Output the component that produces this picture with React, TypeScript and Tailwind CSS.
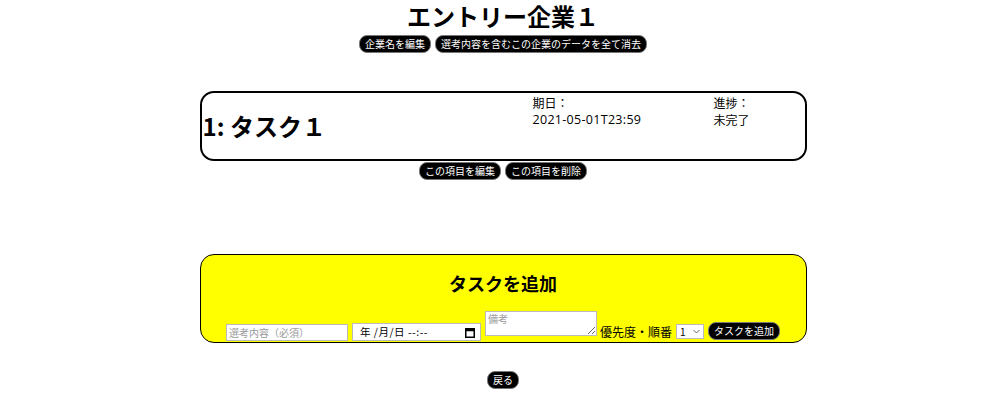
import React from 'react';

const jp = '"Noto Sans CJK JP", "Noto Sans", sans-serif';

function Btn({ children }: { children: React.ReactNode }) {
  return (
    <button
      className="inline-flex items-center h-[18px] px-[5px] bg-black text-white text-[10px] leading-none rounded-[8px] border-[1.5px] border-[#777]"
      style={{ fontFamily: jp }}
    >
      {children}
    </button>
  );
}

export default function App() {
  return (
    <main className="w-[1006px] min-h-[400px] bg-white text-black flex flex-col items-center" style={{ fontFamily: jp }}>
      {/* Header */}
      <h1 className="text-[24px] font-bold leading-[32px]">エントリー企業１</h1>
      <div className="flex gap-[4px] mt-[3px]">
        <Btn>企業名を編集</Btn>
        <Btn>選考内容を含むこの企業のデータを全て消去</Btn>
      </div>

      {/* Task card */}
      <div className="mt-[38px] w-[607px] h-[70px] border-2 border-black rounded-[14px] flex">
        <div className="w-[331px] flex items-center pl-[1px] text-[24px] font-bold">1: タスク１</div>
        <div className="w-[181px] pt-[1px] text-[12px] leading-[17px]">
          <div>期日：</div>
          <div className="text-[12.5px] tracking-[0.3px]" style={{ fontFamily: '"Open Sans", sans-serif' }}>2021-05-01T23:59</div>
        </div>
        <div className="flex-1 pt-[1px] text-[12px] leading-[17px]">
          <div>進捗：</div>
          <div>未完了</div>
        </div>
      </div>
      <div className="flex gap-[4px] mt-[1px]">
        <Btn>この項目を編集</Btn>
        <Btn>この項目を削除</Btn>
      </div>

      {/* Add task */}
      <div className="mt-[74px] w-[607px] h-[89px] bg-[#ffff00] border-[1.5px] border-black rounded-[14px] flex flex-col items-center">
        <h2 className="mt-[16px] text-[18px] font-bold leading-[24px]">タスクを追加</h2>
        <div className="mt-auto mb-[1px] flex items-end gap-[4px]">
          <input
            className="w-[122px] h-[17px] bg-white border border-[#bbb] px-[2px] text-[10px] placeholder:text-[#999] outline-none"
            placeholder="選考内容（必須）"
            style={{ fontFamily: jp }}
          />
          <div className="w-[129px] h-[18px] bg-white border border-[#bbb] flex items-center justify-between pl-[7px] pr-[5px] text-[10.5px]">
            <span className="tracking-[0.5px]">年 /月/日 --:--</span>
            <svg width="10" height="11" viewBox="0 0 10 11">
              <rect x="0.75" y="1.75" width="8.5" height="8.5" fill="none" stroke="#000" strokeWidth="1.5" />
              <rect x="0.75" y="1.75" width="8.5" height="2.5" fill="#000" />
            </svg>
          </div>
          <textarea
            className="w-[112px] h-[25px] mb-[5px] bg-white border border-[#bbb] px-[2px] py-0 text-[10px] leading-[14px] placeholder:text-[#999] outline-none block"
            placeholder="備考"
            style={{ fontFamily: jp }}
          />
          <span className="text-[12px] leading-[16px] mb-[1px] -ml-[1px]">優先度・順番</span>
          <div className="w-[28px] h-[15px] mb-[2px] bg-white border border-[#bbb] flex items-center justify-between pl-[3px] pr-[3px] text-[10px]">
            <span>1</span>
            <svg width="7" height="5" viewBox="0 0 7 5">
              <path d="M0.5 1 L3.5 4 L6.5 1" fill="none" stroke="#666" strokeWidth="1" />
            </svg>
          </div>
          <div className="mb-[1px]">
            <Btn>タスクを追加</Btn>
          </div>
        </div>
      </div>

      {/* Back */}
      <div className="mt-[22px]">
        <Btn>戻る</Btn>
      </div>
    </main>
  );
}
